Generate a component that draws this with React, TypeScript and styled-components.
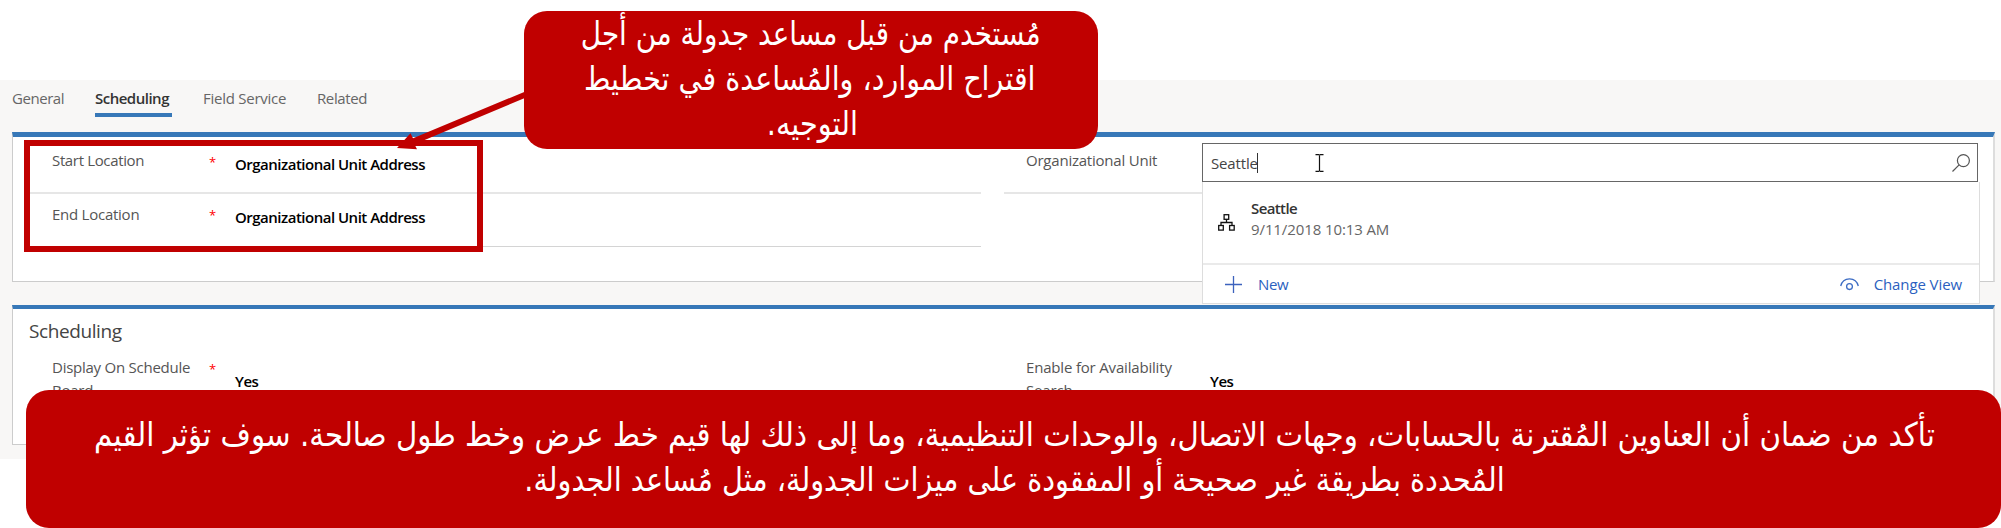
import React from "react";
import styled, { createGlobalStyle } from "styled-components";

const GlobalStyle = createGlobalStyle`
  *, *::before, *::after { box-sizing: border-box; }
  html, body { margin: 0; background: #fff; overflow: hidden; }
  body { font-family: "Open Sans", "Noto Sans", sans-serif; font-size: 15px; color: #555; }
`;

const Page = styled.div`
  position: relative;
  width: 2001px;
  height: 528px;
  padding-top: 80px;
  overflow: hidden;
`;

const Form = styled.main`
  height: 379px;
  padding: 0 6px 0 12px;
  background: #f8f7f6;
`;

const Tabs = styled.nav`
  display: flex;
  gap: 31px;
  height: 52px;
  padding-top: 8px;
`;

const Tab = styled.a<{ $active?: boolean; $w: number; $ls: number }>`
  width: ${(p) => p.$w}px;
  height: 29px;
  line-height: 21px;
  white-space: nowrap;
  letter-spacing: ${(p) => p.$ls}px;
  color: ${(p) => (p.$active ? "#333" : "#666")};
  font-weight: ${(p) => (p.$active ? 600 : 400)};
  border-bottom: ${(p) => (p.$active ? "4px solid #3778b8" : "none")};
`;

const Section = styled.section<{ $h: number; $bar: number }>`
  position: relative;
  height: ${(p) => p.$h}px;
  margin-bottom: 23px;
  background: #fff;
  border: 1px solid #ccc;
  border-right: 2px solid #ddd;
  border-top: ${(p) => p.$bar}px solid #3778b8;
`;

const Columns = styled.div`
  display: flex;
  gap: 23px;
  padding-left: 17px;
`;

const Column = styled.div<{ $w: number }>`
  width: ${(p) => p.$w}px;
`;

const Field = styled.div<{ $h: number; $line?: string }>`
  display: flex;
  height: ${(p) => p.$h}px;
  padding-left: 22px;
  border-bottom: ${(p) => p.$line ?? "none"};
`;

const Label = styled.label<{ $top: number; $ls?: number }>`
  width: 157px;
  padding-top: ${(p) => p.$top}px;
  line-height: 23px;
  letter-spacing: ${(p) => p.$ls ?? -0.25}px;
  white-space: pre;
`;

const Required = styled.span<{ $top: number; $w?: number }>`
  width: ${(p) => p.$w ?? 26}px;
  padding-top: ${(p) => p.$top}px;
  line-height: 20px;
  font-size: 13px;
  color: #f00;
`;

const Value = styled.span<{ $top: number }>`
  padding-top: ${(p) => p.$top}px;
  line-height: 22px;
  font-weight: 600;
  color: #000;
  letter-spacing: -0.5px;
  white-space: nowrap;
`;

const SectionTitle = styled.h2`
  margin: 0;
  padding: 8px 0 0 16px;
  height: 43px;
  font-size: 19px;
  line-height: 28px;
  font-weight: 400;
  letter-spacing: -0.4px;
  color: #444;
`;

const Lookup = styled.div`
  position: absolute;
  top: 6px;
  left: 1189px;
  width: 778px;
`;

const SearchBox = styled.div`
  display: flex;
  align-items: center;
  width: 776px;
  height: 39px;
  padding: 0 7px 0 8px;
  background: #fff;
  border: 1px solid #666;
  color: #444;
`;

const Caret = styled.span`
  width: 1px;
  height: 20px;
  background: #333;
`;

const Query = styled.span`
  width: 46px;
  letter-spacing: -0.15px;
`;

const IBeam = styled.svg`
  margin-left: 57px;
`;

const SearchIcon = styled.svg`
  margin-left: auto;
`;

const Menu = styled.div`
  height: 122px;
  background: #fff;
  border: 1px solid #ddd;
  border-top: none;
`;

const Result = styled.div`
  display: flex;
  height: 83px;
  padding: 16px 0 0 15px;
  gap: 16px;
  border-bottom: 2px solid #eaeaea;
`;

const ResultIcon = styled.svg`
  margin-top: 16px;
`;

const ResultText = styled.div`
  line-height: 21px;
  color: #666;
  letter-spacing: -0.1px;
`;

const ResultName = styled.div`
  font-weight: 600;
  color: #333;
  letter-spacing: -0.6px;
`;

const MenuFooter = styled.div`
  display: flex;
  align-items: center;
  height: 38px;
  padding: 0 17px 0 22px;
  color: #2b5fc0;
`;

const MenuAction = styled.span<{ $gap: number; $ls: number }>`
  display: flex;
  align-items: center;
  gap: ${(p) => p.$gap}px;
  letter-spacing: ${(p) => p.$ls}px;

  & + & { margin-left: auto; }
`;

const Highlight = styled.div`
  position: absolute;
  left: 24px;
  top: 140px;
  width: 459px;
  height: 112px;
  border: 6px solid #c00000;
`;

const Arrow = styled.svg`
  position: absolute;
  left: 390px;
  top: 85px;
`;

const Callout = styled.aside<{ $x: number; $y: number; $w: number; $pad: number }>`
  position: absolute;
  left: ${(p) => p.$x}px;
  top: ${(p) => p.$y}px;
  width: ${(p) => p.$w}px;
  height: 138px;
  padding-top: ${(p) => p.$pad}px;
  display: flex;
  flex-direction: column;
  align-items: center;
  border-radius: 23px;
  background: #c00000;
  color: #fff;
  font-family: "DejaVu Sans", sans-serif;
  font-size: 33px;
  line-height: 45px;
`;

const CalloutLine = styled.div<{ $sx: number; $shift?: number }>`
  width: max-content;
  white-space: nowrap;
  transform: translateX(${(p) => p.$shift ?? 0}px) scaleX(${(p) => p.$sx});
`;

export default function App() {
  return (
    <Page>
      <GlobalStyle />
      <Form>
        <Tabs>
          <Tab $w={52} $ls={-0.45}>General</Tab>
          <Tab $w={77} $ls={-0.5} $active>Scheduling</Tab>
          <Tab $w={83} $ls={-0.25}>Field Service</Tab>
          <Tab $w={52} $ls={-0.4}>Related</Tab>
        </Tabs>
        <Section $h={150} $bar={5}>
          <Columns>
            <Column $w={951}>
              <Field $h={57} $line="2px solid #e6e6e6">
                <Label $top={12} $ls={-0.35}>Start Location</Label>
                <Required $top={15}>*</Required>
                <Value $top={16}>Organizational Unit Address</Value>
              </Field>
              <Field $h={53} $line="1px solid #d4d4d4">
                <Label $top={9}>End Location</Label>
                <Required $top={11}>*</Required>
                <Value $top={12}>Organizational Unit Address</Value>
              </Field>
            </Column>
            <Column $w={960}>
              <Field $h={57} $line="2px solid #e6e6e6">
                <Label $top={12} $ls={-0.22}>Organizational Unit</Label>
              </Field>
            </Column>
          </Columns>
          <Lookup>
            <SearchBox>
              <Query>Seattle</Query>
              <Caret />
              <IBeam width="9" height="18" viewBox="0 0 9 18" fill="none" stroke="#111" strokeWidth="1.2">
                <path d="M0.5 0.6H3.5L4.5 1.3L5.5 0.6H8.5M4.5 1.3V16.7M0.5 17.4H3.5L4.5 16.7L5.5 17.4H8.5" />
              </IBeam>
              <SearchIcon width="18" height="18" viewBox="0 0 18 18" fill="none" stroke="#555" strokeWidth="1.2">
                <circle cx="11.4" cy="6.6" r="6" />
                <path d="M7.1 10.9L0.5 17.5" />
              </SearchIcon>
            </SearchBox>
            <Menu>
              <Result>
                <ResultIcon width="17" height="17" viewBox="0 0 17 17" fill="none" stroke="#111" strokeWidth="1.3">
                  <rect x="6.1" y="0.7" width="4.6" height="4.6" />
                  <rect x="0.7" y="11.5" width="4.6" height="4.6" />
                  <rect x="11.6" y="11.5" width="4.6" height="4.6" />
                  <path d="M8.5 5.3V8.5M3 11.5V8.5H14V11.5" />
                </ResultIcon>
                <ResultText>
                  <ResultName>Seattle</ResultName>
                  9/11/2018 10:13 AM
                </ResultText>
              </Result>
              <MenuFooter>
                <MenuAction $gap={16} $ls={-0.3}>
                  <svg width="17" height="17" viewBox="0 0 17 17" stroke="#3c62bd" strokeWidth="1.3">
                    <path d="M0 8.5H17M8.5 0V17" />
                  </svg>
                  New
                </MenuAction>
                <MenuAction $gap={15} $ls={-0.1}>
                  <svg width="19" height="13" viewBox="0 0 19 13" fill="none" stroke="#3c6cc4" strokeWidth="1.3">
                    <path d="M0.7 8C1.8 3.4 5.2 0.8 9.5 0.8S17.2 3.4 18.3 8" />
                    <circle cx="9.5" cy="8.6" r="2.9" />
                  </svg>
                  Change View
                </MenuAction>
              </MenuFooter>
            </Menu>
          </Lookup>
        </Section>
        <Section $h={140} $bar={4}>
          <SectionTitle>Scheduling</SectionTitle>
          <Columns>
            <Column $w={951}>
              <Field $h={57}>
                <Label $top={4}>{"Display On Schedule\nBoard"}</Label>
                <Required $top={7}>*</Required>
                <Value $top={18}>Yes</Value>
              </Field>
            </Column>
            <Column $w={960}>
              <Field $h={57}>
                <Label $top={4} $ls={-0.18}>{"Enable for Availability\nSearch"}</Label>
                <Required $top={7} $w={27} />
                <Value $top={18}>Yes</Value>
              </Field>
            </Column>
          </Columns>
        </Section>
      </Form>
      <Highlight />
      <Arrow width="140" height="66" viewBox="390 85 140 66" fill="#c00000">
        <path d="M526 91.2V97.5L414.5 144.2L417 149.3L397 148L410.5 133.3L413 138.3Z" />
      </Arrow>
      <Callout $x={524} $y={11} $w={574} $pad={0} dir="rtl" lang="ar">
        <CalloutLine $sx={0.843}>مُستخدم من قبل مساعد جدولة من أجل</CalloutLine>
        <CalloutLine $sx={0.866} $shift={-1}>اقتراح الموارد، والمُساعدة في تخطيط</CalloutLine>
        <CalloutLine $sx={0.87} $shift={1}>التوجيه.</CalloutLine>
      </Callout>
      <Callout $x={26} $y={390} $w={1975} $pad={22} dir="rtl" lang="ar">
        <CalloutLine $sx={0.888} $shift={1}>تأكد من ضمان أن العناوين المُقترنة بالحسابات، وجهات الاتصال، والوحدات التنظيمية، وما إلى ذلك لها قيم خط عرض وخط طول صالحة. سوف تؤثر القيم</CalloutLine>
        <CalloutLine $sx={0.87} $shift={1}>المُحددة بطريقة غير صحيحة أو المفقودة على ميزات الجدولة، مثل مُساعد الجدولة.</CalloutLine>
      </Callout>
    </Page>
  );
}
